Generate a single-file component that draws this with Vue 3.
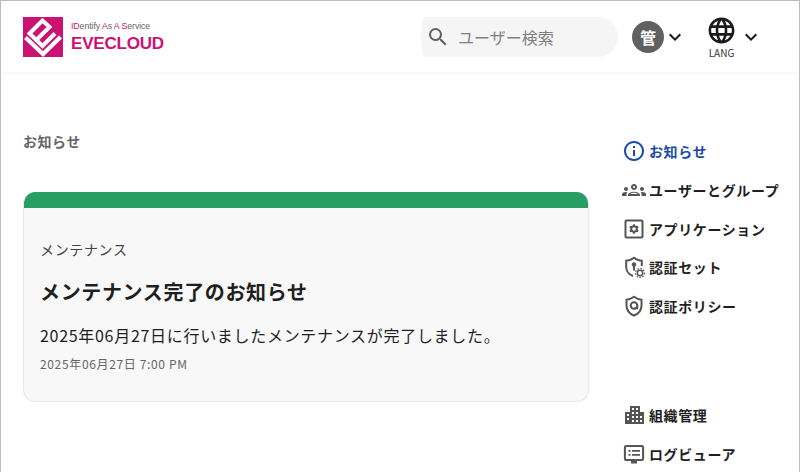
<script setup>
const navTop = [
  { key: 'news', label: 'お知らせ', active: true },
  { key: 'users', label: 'ユーザーとグループ' },
  { key: 'apps', label: 'アプリケーション' },
  { key: 'authset', label: '認証セット' },
  { key: 'policy', label: '認証ポリシー' },
]
const navBottom = [
  { key: 'org', label: '組織管理' },
  { key: 'logs', label: 'ログビューア' },
]
</script>

<template>
  <div class="page">
    <header class="topbar">
      <div class="brand">
        <svg class="brand-mark" viewBox="0 0 40 40" width="40" height="40">
          <rect width="40" height="40" fill="#cb1273" />
          <path d="M2.500 20.500 20 37 37.500 20" fill="none" stroke="#fff" stroke-width="4.200" />
          <path d="M32 16.500 19.500 29 6.500 16.500 19.500 3.500 26.500 10 13.500 22.800" fill="none" stroke="#fff" stroke-width="4" />
        </svg>
        <div class="brand-text">
          <div class="brand-tag"><b>ID</b>entify <b>A</b>s <b>A</b> <b>S</b>ervice</div>
          <div class="brand-name">EVECLOUD</div>
        </div>
      </div>

      <div class="search">
        <svg class="search-icon" viewBox="0 0 24 24" width="24" height="24">
          <path fill="#616161" d="M15.500 14h-.79l-.28-.27A6.470 6.470 0 0 0 16 9.500 6.500 6.500 0 1 0 9.500 16c1.610 0 3.090-.59 4.230-1.570l.27.28v.79l5 4.990L20.490 19l-4.990-5zm-6 0C7.010 14 5 11.990 5 9.500S7.010 5 9.500 5 14 7.010 14 9.500 11.990 14 9.500 14z" />
        </svg>
        <span class="search-ph">ユーザー検索</span>
      </div>

      <div class="user">
        <span class="avatar">管</span>
        <svg class="chev" viewBox="0 0 24 24" width="24" height="24"><path d="M7.410 8.590 12 13.170l4.590-4.580L18 10l-6 6-6-6z" fill="#1a1a1a" /></svg>
      </div>

      <div class="lang">
        <div class="lang-col">
          <svg viewBox="0 0 24 24" width="31" height="31">
            <path fill="#1a1a1a" d="M11.990 2C6.470 2 2 6.480 2 12s4.470 10 9.990 10C17.520 22 22 17.520 22 12S17.520 2 11.990 2zm6.930 6h-2.950a15.650 15.650 0 0 0-1.380-3.560A8.030 8.030 0 0 1 18.920 8zM12 4.040c.83 1.200 1.480 2.530 1.910 3.960h-3.820c.43-1.430 1.080-2.760 1.910-3.960zM4.260 14C4.100 13.360 4 12.690 4 12s.1-1.360.26-2h3.380c-.08.660-.14 1.320-.14 2s.06 1.340.14 2H4.260zm.820 2h2.950c.32 1.250.78 2.450 1.380 3.560A7.987 7.987 0 0 1 5.080 16zm2.950-8H5.080a7.987 7.987 0 0 1 4.330-3.560A15.650 15.650 0 0 0 8.030 8zM12 19.960c-.83-1.200-1.480-2.530-1.910-3.960h3.820c-.43 1.430-1.080 2.760-1.910 3.960zM14.340 14H9.660c-.09-.66-.16-1.320-.16-2s.07-1.350.16-2h4.680c.09.650.16 1.320.16 2s-.07 1.340-.16 2zm.250 5.560c.6-1.110 1.060-2.310 1.380-3.560h2.950a8.030 8.030 0 0 1-4.330 3.560zM16.360 14c.08-.66.14-1.320.14-2s-.06-1.340-.14-2h3.380c.16.640.26 1.310.26 2s-.1 1.360-.26 2h-3.380z" />
          </svg>
          <span class="lang-label">LANG</span>
        </div>
        <svg class="chev" viewBox="0 0 24 24" width="24" height="24"><path d="M7.410 8.590 12 13.170l4.590-4.580L18 10l-6 6-6-6z" fill="#1a1a1a" /></svg>
      </div>
    </header>

    <div class="body">
      <main class="content">
        <h1 class="page-title">お知らせ</h1>
        <article class="card">
          <div class="card-bar"></div>
          <div class="card-body">
            <div class="card-cat">メンテナンス</div>
            <h2 class="card-title">メンテナンス完了のお知らせ</h2>
            <p class="card-text">2025年06月27日に行いましたメンテナンスが完了しました。</p>
            <div class="card-date">2025年06月27日 7:00 PM</div>
          </div>
        </article>
      </main>

      <nav class="side">
        <ul class="nav-group">
          <li v-for="item in navTop" :key="item.key" class="nav-item" :class="{ 'nav-item--active': item.active }">
            <span class="nav-icon">
              <svg v-if="item.key === 'news'" viewBox="0 0 24 24" width="24" height="24">
                <path fill="#1b49a8" d="M11 7h2v2h-2zm0 4h2v6h-2zm1-9C6.480 2 2 6.480 2 12s4.480 10 10 10 10-4.480 10-10S17.520 2 12 2zm0 18c-4.410 0-8-3.590-8-8s3.590-8 8-8 8 3.590 8 8-3.590 8-8 8z" />
              </svg>
              <svg v-else-if="item.key === 'users'" viewBox="0 0 24 24" width="24" height="24">
                <path fill="#555" d="M4 13c1.100 0 2-.9 2-2s-.9-2-2-2-2 .9-2 2 .9 2 2 2zm1.130 1.100C4.760 14.040 4.390 14 4 14c-.99 0-1.930.21-2.780.58A2.010 2.010 0 0 0 0 16.430V18h4.500v-1.610c0-.83.23-1.610.63-2.290zM20 13c1.100 0 2-.9 2-2s-.9-2-2-2-2 .9-2 2 .9 2 2 2zm4 3.430c0-.81-.48-1.530-1.220-1.850A6.950 6.950 0 0 0 20 14c-.39 0-.76.040-1.130.1.4.68.63 1.460.63 2.290V18H24v-1.570zM12 6c1.660 0 3 1.340 3 3s-1.340 3-3 3-3-1.340-3-3 1.340-3 3-3zm0 2c-.55 0-1 .45-1 1s.45 1 1 1 1-.45 1-1-.45-1-1-1zm0 5.750c1.630 0 3.070.39 4.240.9 1.080.48 1.760 1.560 1.760 2.730V18H6v-.61c0-1.180.68-2.260 1.760-2.730A10.500 10.500 0 0 1 12 13.750zM8.170 16h7.660c-.85-.83-2.260-1.250-3.830-1.250S9.020 15.170 8.170 16z" />
              </svg>
              <svg v-else-if="item.key === 'apps'" viewBox="0 0 24 24" width="24" height="24">
                <rect x="3.500" y="3.500" width="17" height="17" rx="1" fill="none" stroke="#555" stroke-width="2" />
                <circle cx="12" cy="12" r="2.800" fill="none" stroke="#555" stroke-width="2" />
                <path d="M12 7.200v2M12 14.800v2M7.800 9.600l1.700 1M14.500 13.400l1.700 1M7.800 14.400l1.700-1M14.500 10.600l1.700-1" stroke="#555" stroke-width="1.800" />
              </svg>
              <svg v-else-if="item.key === 'authset'" viewBox="0 0 24 24" width="24" height="24">
                <path d="M11 21C7 19.800 4.200 16 4.200 11.500V5.800C7 5.500 9.500 4.500 12 2.800c2.500 1.700 5 2.700 7.800 3V11" fill="none" stroke="#555" stroke-width="2" />
                <circle cx="12" cy="9.500" r="2.200" fill="#555" />
                <rect x="11" y="10" width="2" height="5.500" fill="#555" />
                <circle cx="18" cy="18" r="2.700" fill="none" stroke="#555" stroke-width="1.500" />
                <circle cx="18" cy="18" r="4.500" fill="none" stroke="#555" stroke-width="1.200" stroke-dasharray="1.500 1.500" />
              </svg>
              <svg v-else viewBox="0 0 24 24" width="24" height="24">
                <path d="M12 21.500C7.500 19.800 4.500 16 4.500 11.500V5.800C7.200 5.500 9.600 4.500 12 2.800c2.400 1.700 4.800 2.700 7.500 3v5.700c0 4.500-3 8.300-7.500 10z" fill="none" stroke="#555" stroke-width="2" />
                <circle cx="12" cy="11.500" r="3.300" fill="none" stroke="#555" stroke-width="2" />
                <path d="M15.300 11.500v2.800h-3" fill="none" stroke="#555" stroke-width="1.800" />
              </svg>
            </span>
            <span class="nav-label">{{ item.label }}</span>
          </li>
        </ul>
        <ul class="nav-group nav-group--low">
          <li v-for="item in navBottom" :key="item.key" class="nav-item">
            <span class="nav-icon">
              <svg v-if="item.key === 'org'" viewBox="0 0 24 24" width="24" height="24">
                <path fill="#555" fill-rule="evenodd" d="M8 3h10v6h4v12H3V9h5V3zM10 5v2h2V5h-2zm4 0v2h2V5h-2zM10 9v2h2V9h-2zm4 0v2h2V9h-2zM5 11v2h2v-2H5zm5 2v2h2v-2h-2zm4 0v2h2v-2h-2zm4 0v2h2v-2h-2zM5 15v2h2v-2H5zm5 2v2h2v-2h-2zm4 0v2h2v-2h-2zm4 0v2h2v-2h-2z" />
              </svg>
              <svg v-else viewBox="0 0 24 24" width="24" height="24">
                <rect x="2.900" y="3.900" width="18.200" height="14.200" rx="1.500" fill="none" stroke="#555" stroke-width="2" />
                <path d="M9 19h6v2.500H9z" fill="#555" />
                <path d="M6.500 8h2v1.800h-2zM10 8h8v1.800h-8zM6.500 12h2v1.800h-2zM10 12h8v1.800h-8z" fill="#555" />
              </svg>
            </span>
            <span class="nav-label">{{ item.label }}</span>
          </li>
        </ul>
      </nav>
    </div>
  </div>
</template>

<style>
html, body {
  margin: 0;
  overflow: hidden;
  background: #fff;
}
</style>

<style scoped>
.page {
  box-sizing: border-box;
  width: 800px;
  height: 472px;
  border: 1px solid #bdbdbd;
  border-bottom: 0;
  overflow: hidden;
  font-family: "Noto Sans CJK JP", "Noto Sans", sans-serif;
  color: #1f1f1f;
}

/* header */
.topbar {
  display: flex;
  align-items: center;
  height: 71px;
  padding-left: 22px;
  box-shadow: 0 1px 4px rgba(0, 0, 0, 0.06);
  position: relative;
}

.brand {
  display: flex;
  align-items: center;
  gap: 8px;
  width: 398px;
}

.brand-mark {
  display: block;
  flex-shrink: 0;
}

.brand-tag {
  font-family: "Liberation Sans", sans-serif;
  font-size: 8.800px;
  line-height: 10px;
  letter-spacing: -0.1px;
  color: #666;
  white-space: nowrap;
}

.brand-tag b {
  font-weight: 400;
  color: #cb1273;
}

.brand-name {
  font-family: "Liberation Sans", sans-serif;
  font-size: 17px;
  font-weight: 700;
  line-height: 18px;
  margin-top: 4px;
  letter-spacing: -0.2px;
  color: #cb1273;
}

.search {
  display: flex;
  align-items: center;
  box-sizing: border-box;
  width: 197px;
  height: 40px;
  padding-left: 5px;
  border-radius: 4px 20px 20px 4px / 20px;
  background: #f5f5f5;
}

.search-ph {
  margin-left: 8px;
  font-size: 16px;
  color: #808080;
}

.user {
  display: flex;
  align-items: center;
  margin-left: 14px;
}

.avatar {
  display: flex;
  align-items: center;
  justify-content: center;
  width: 32px;
  height: 32px;
  border-radius: 50%;
  background: #616161;
  color: #fff;
  font-size: 16px;
  font-weight: 700;
}

.chev {
  margin-left: -1px;
}

.lang {
  display: flex;
  align-items: center;
  margin-left: 19px;
}

.lang-col {
  display: flex;
  flex-direction: column;
  align-items: center;
  width: 31px;
}

.lang-col svg {
  display: block;
}

.lang-label {
  font-size: 10px;
  line-height: 12px;
  margin-top: 1px;
  color: #333;
}

.lang .chev {
  margin-left: 2px;
}

/* body */
.body {
  display: flex;
  align-items: flex-start;
}

.content {
  width: 566px;
  margin-left: 22px;
  padding-top: 59px;
}

.page-title {
  margin: 0;
  font-size: 14px;
  line-height: 20px;
  font-weight: 700;
  letter-spacing: 0.5px;
  color: #666;
}

.card {
  margin-top: 41px;
  height: 210px;
  box-sizing: border-box;
  border: 1px solid #e8e8e8;
  border-top: 0;
  border-radius: 12px;
  background: #f8f8f8;
  overflow: hidden;
}

.card-bar {
  height: 16px;
  margin: 0 -1px;
  background: #279f64;
}

.card-body {
  padding: 31px 16px 0;
}

.card-cat {
  font-size: 14px;
  line-height: 20px;
  letter-spacing: 0.65px;
  color: #444;
}

.card-title {
  margin: 19px 0 0;
  font-size: 20px;
  line-height: 28px;
  font-weight: 700;
  letter-spacing: 0.65px;
  color: #1f1f1f;
}

.card-text {
  margin: 17px 0 0;
  font-size: 16px;
  line-height: 24px;
  letter-spacing: 0.7px;
  color: #1f1f1f;
}

.card-date {
  margin-top: 8px;
  font-size: 12px;
  line-height: 18px;
  letter-spacing: 0.65px;
  color: #666;
}

/* side menu */
.side {
  margin-left: 33px;
  padding-top: 60px;
}

.nav-group {
  list-style: none;
  margin: 0;
  padding: 0;
}

.nav-group--low {
  margin-top: 70.500px;
}

.nav-item {
  display: flex;
  align-items: center;
  height: 38.700px;
  font-size: 14px;
  font-weight: 700;
  letter-spacing: 0.6px;
  white-space: nowrap;
  color: #1f1f1f;
}

.nav-item--active {
  color: #1b49a8;
}

.nav-icon {
  display: flex;
  width: 24px;
  height: 24px;
  margin-right: 3px;
}
</style>
